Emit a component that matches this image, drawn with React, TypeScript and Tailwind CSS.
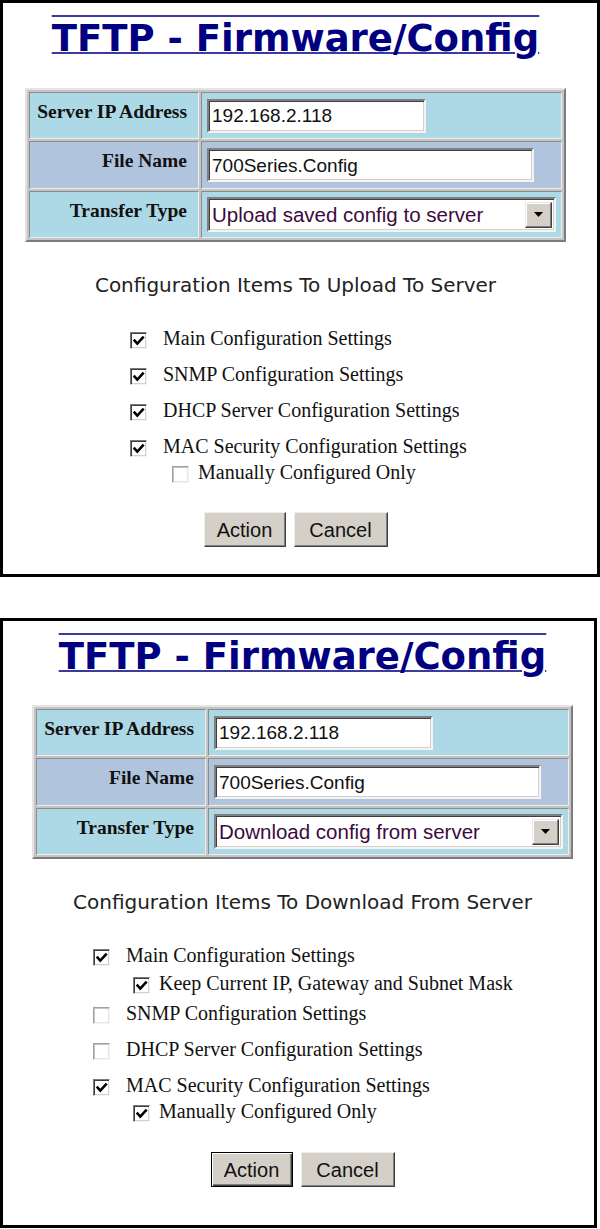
import React from "react";

const SERIF = "[font-family:'Liberation_Serif',serif]";
const SANS = "[font-family:'Liberation_Sans',Arial,sans-serif]";
const VERD = "[font-family:'DejaVu_Sans',Verdana,sans-serif]";

function Check({ checked }: { checked: boolean }) {
  return (
    <span
      className={
        checked
          ? "relative inline-block w-[17px] h-[17px] shrink-0 bg-white border border-t-[#7a7a7a] border-l-[#7a7a7a] border-b-[#f4f4f4] border-r-[#f4f4f4] shadow-[inset_1px_1px_0_#3c3c3c,inset_-1px_-1px_0_#d4d0c8]"
          : "relative inline-block w-[17px] h-[17px] shrink-0 bg-white border border-t-[#a0a0a0] border-l-[#a0a0a0] border-b-[#f4f4f4] border-r-[#f4f4f4] shadow-[inset_1px_1px_0_#c4c4c4,inset_-1px_-1px_0_#e6e6e6]"
      }
    >
      {checked && (
        <svg viewBox="0 0 15 15" className="absolute left-0 top-0 w-[15px] h-[15px]">
          <path d="M3.6 7.6 L6.3 10.6 L11.8 4.6" fill="none" stroke="#000" strokeWidth="2.6" strokeLinecap="square" />
        </svg>
      )}
    </span>
  );
}

function Row({ checked, label, sub, mt }: { checked: boolean; label: string; sub?: boolean; mt: string }) {
  return (
    <div className={"flex items-center h-[24px] " + mt}>
      <Check checked={checked} />
      <span className={SERIF + " text-[20px] text-[#111] leading-[24px] -mt-[4px] " + (sub ? "ml-[9px]" : "ml-[16px]")}>{label}</span>
    </div>
  );
}

function TextInput({ value, w }: { value: string; w: string }) {
  return (
    <div
      className={
        w +
        " h-[34px] bg-white border-2 border-t-[#808080] border-l-[#808080] border-b-[#f4f4f4] border-r-[#f4f4f4] shadow-[inset_1px_1px_0_#404040,inset_-1px_-1px_0_#d4d0c8] flex items-center pl-[3px] pt-[1px]"
      }
    >
      <span className={SANS + " text-[19px] text-[#111] leading-[24px]"}>{value}</span>
    </div>
  );
}

function SelectBox({ value }: { value: string }) {
  return (
    <div className="w-[349px] h-[35px] bg-white border-2 border-t-[#808080] border-l-[#808080] border-b-[#f4f4f4] border-r-[#f4f4f4] shadow-[inset_1px_1px_0_#404040,inset_-1px_-1px_0_#d4d0c8] flex items-center pl-[3px] pr-[2px]">
      <span className={SANS + " text-[20.5px] text-[#3c0a3c] leading-[24px] pt-[1px]"}>{value}</span>
      <span className="ml-auto w-[27px] h-[26px] bg-[#d4d0c8] border border-t-[#e8e8e8] border-l-[#e8e8e8] border-b-[#404040] border-r-[#404040] shadow-[inset_-1px_-1px_0_#808080,inset_1px_1px_0_#ffffff] flex items-center justify-center">
        <svg viewBox="0 0 9 5" className="w-[9px] h-[5px]">
          <path d="M0 0 L9 0 L4.5 5 Z" fill="#000" />
        </svg>
      </span>
    </div>
  );
}

function Btn({ label, w, def }: { label: string; w: string; def?: boolean }) {
  return (
    <div
      className={
        w +
        (def
          ? " h-[35px] bg-[#d4d0c8] border border-black shadow-[inset_1px_1px_0_#ffffff,inset_-1px_-1px_0_#404040,inset_-2px_-2px_0_#808080] flex items-center justify-center"
          : " h-[35px] bg-[#d4d0c8] border border-t-[#f0f0f0] border-l-[#f0f0f0] border-b-[#404040] border-r-[#404040] shadow-[inset_-1px_-1px_0_#808080] flex items-center justify-center")
      }
    >
      <span className={SANS + " text-[20px] text-[#111] leading-[24px]"}>{label}</span>
    </div>
  );
}

const LABEL_TD =
  "w-[170px] align-top text-right pr-[11px] pt-[7px] border border-t-[#8c8c8c] border-l-[#8c8c8c] border-b-[#eeeeee] border-r-[#eeeeee]";
const INPUT_TD =
  "align-middle pl-[5px] border border-t-[#8c8c8c] border-l-[#8c8c8c] border-b-[#eeeeee] border-r-[#eeeeee]";

function ConfigTable({ select }: { select: string }) {
  return (
    <table className="w-[541px] border-separate border-spacing-[2px] border-2 border-t-[#e4e4e4] border-l-[#e4e4e4] border-b-[#7c7c7c] border-r-[#7c7c7c] bg-[#c4c4c4]">
      <tbody>
        <tr className="h-[47px]">
          <td className={LABEL_TD + " bg-[#add8e6]"}>
            <span className={SERIF + " font-bold text-[19.5px] text-[#111] leading-[22px] whitespace-nowrap"}>Server IP Address</span>
          </td>
          <td className={INPUT_TD + " bg-[#add8e6]"}>
            <TextInput value="192.168.2.118" w="w-[219px]" />
          </td>
        </tr>
        <tr className="h-[48px]">
          <td className={LABEL_TD + " bg-[#b0c4de]"}>
            <span className={SERIF + " font-bold text-[19.5px] text-[#111] leading-[22px]"}>File Name</span>
          </td>
          <td className={INPUT_TD + " bg-[#b0c4de]"}>
            <TextInput value="700Series.Config" w="w-[327px]" />
          </td>
        </tr>
        <tr className="h-[47px]">
          <td className={LABEL_TD + " bg-[#add8e6]"}>
            <span className={SERIF + " font-bold text-[19.5px] text-[#111] leading-[22px]"}>Transfer Type</span>
          </td>
          <td className={INPUT_TD + " bg-[#add8e6]"}>
            <SelectBox value={select} />
          </td>
        </tr>
      </tbody>
    </table>
  );
}

function Title() {
  return (
    <div className="text-center h-[60px] pt-[14px]">
      <span
        className={
          VERD +
          " font-bold text-[37px] leading-[44px] text-[#000080] [text-decoration-line:underline_overline] decoration-2 decoration-[#3a3aa0]"
        }
      >
        TFTP - Firmware/Config
      </span>
    </div>
  );
}

export default function App() {
  return (
    <div className="bg-white w-[600px] h-[1229px]">
      {/* Panel 1 */}
      <div className="w-[600px] h-[577px] border-[3px] border-black">
        <div className="ml-[22px] w-[541px] flex flex-col">
          <Title />
          <div className="mt-[25px]">
            <ConfigTable select="Upload saved config to server" />
          </div>
          <div className={VERD + " text-center text-[20px] text-[#222] leading-[24px] mt-[31px]"}>
            Configuration Items To Upload To Server
          </div>
          <div className="ml-[105px] mt-[31px] flex flex-col">
            <Row checked label="Main Configuration Settings" mt="mt-0" />
            <Row checked label="SNMP Configuration Settings" mt="mt-[12px]" />
            <Row checked label="DHCP Server Configuration Settings" mt="mt-[12px]" />
            <Row checked label="MAC Security Configuration Settings" mt="mt-[12px]" />
            <div className="ml-[42px]">
              <Row checked={false} sub label="Manually Configured Only" mt="mt-[2px]" />
            </div>
          </div>
          <div className="flex justify-center gap-[8px] mt-[26px]">
            <Btn label="Action" w="w-[82px]" />
            <Btn label="Cancel" w="w-[94px]" />
          </div>
        </div>
      </div>

      {/* Panel 2 */}
      <div className="mt-[41px] w-[597px] h-[610px] border-[3px] border-black">
        <div className="ml-[29px] w-[541px] flex flex-col">
          <Title />
          <div className="mt-[24px]">
            <ConfigTable select="Download config from server" />
          </div>
          <div className={VERD + " text-center text-[20px] text-[#222] leading-[24px] mt-[31px]"}>
            Configuration Items To Download From Server
          </div>
          <div className="ml-[61px] mt-[31px] flex flex-col">
            <Row checked label="Main Configuration Settings" mt="mt-0" />
            <div className="ml-[40px]">
              <Row checked sub label="Keep Current IP, Gateway and Subnet Mask" mt="mt-[4px]" />
            </div>
            <Row checked={false} label="SNMP Configuration Settings" mt="mt-[6px]" />
            <Row checked={false} label="DHCP Server Configuration Settings" mt="mt-[12px]" />
            <Row checked label="MAC Security Configuration Settings" mt="mt-[12px]" />
            <div className="ml-[40px]">
              <Row checked sub label="Manually Configured Only" mt="mt-[2px]" />
            </div>
          </div>
          <div className="flex justify-center gap-[8px] mt-[27px]">
            <Btn label="Action" w="w-[82px]" def />
            <Btn label="Cancel" w="w-[94px]" />
          </div>
        </div>
      </div>
    </div>
  );
}
